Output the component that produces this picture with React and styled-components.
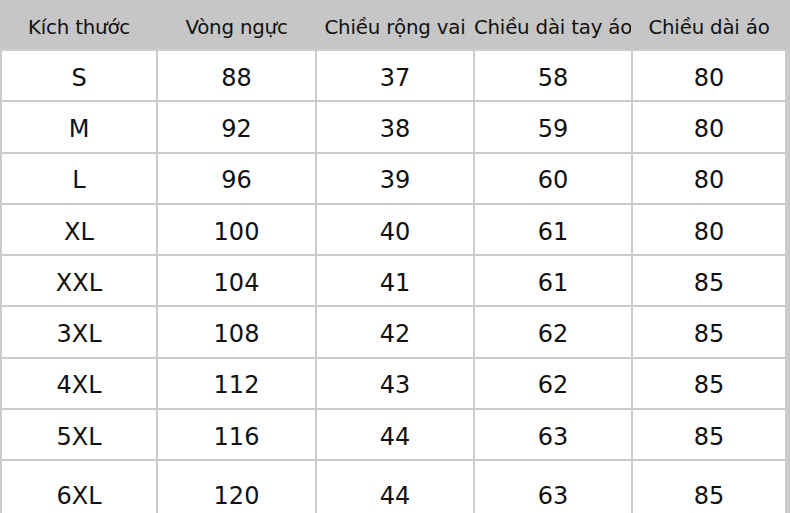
import React from "react";
import styled, { createGlobalStyle } from "styled-components";

const Global = createGlobalStyle`
  html, body { margin: 0; padding: 0; background: #ffffff; }
  body { width: 790px; height: 513px; overflow: hidden; }
`;

const Frame = styled.div`
  width: 790px;
  height: 513px;
  overflow: hidden;
`;

const Table = styled.div`
  display: grid;
  grid-template-columns: 154px 157px 156px 156px 152px;
  grid-template-rows: 49px repeat(8, 49.3px) 66px;
  column-gap: 2px;
  row-gap: 2px;
  width: 790px;
  box-sizing: border-box;
  padding-left: 2px;
  padding-right: 5px;
  background: #cbcbcb;
  font-family: "DejaVu Sans", Verdana, sans-serif;
  color: #111111;
`;

const HeaderCell = styled.div`
  display: flex;
  align-items: center;
  justify-content: center;
  background: #c6c6c6;
  font-size: 19.8px;
  padding-top: 6px;
  white-space: nowrap;
  letter-spacing: -0.2px;
  margin-left: ${(p) => (p.$first ? "-2px" : "0")};
  margin-right: ${(p) => (p.$last ? "-5px" : "0")};
  padding-right: ${(p) => (p.$last ? "5px" : "0")};
  padding-left: ${(p) => (p.$first ? "2px" : "0")};
  position: relative;
  &::after {
    content: "";
    position: absolute;
    right: -2px;
    top: 0;
    bottom: 0;
    width: 2px;
    background: #c6c6c6;
    display: ${(p) => (p.$last ? "none" : "block")};
  }
`;

const Cell = styled.div`
  display: flex;
  align-items: center;
  justify-content: center;
  background: #ffffff;
  font-size: 24px;
  padding-top: 4px;
  box-sizing: border-box;
`;

const headers = [
  "Kích thước",
  "Vòng ngực",
  "Chiều rộng vai",
  "Chiều dài tay áo",
  "Chiều dài áo",
];

const rows = [
  ["S", "88", "37", "58", "80"],
  ["M", "92", "38", "59", "80"],
  ["L", "96", "39", "60", "80"],
  ["XL", "100", "40", "61", "80"],
  ["XXL", "104", "41", "61", "85"],
  ["3XL", "108", "42", "62", "85"],
  ["4XL", "112", "43", "62", "85"],
  ["5XL", "116", "44", "63", "85"],
  ["6XL", "120", "44", "63", "85"],
];

export default function App() {
  return (
    <>
      <Global />
      <Frame>
        <Table>
          {headers.map((h, i) => (
            <HeaderCell key={h} $first={i === 0} $last={i === headers.length - 1}>
              {h}
            </HeaderCell>
          ))}
          {rows.map((r) =>
            r.map((v, j) => <Cell key={r[0] + j}>{v}</Cell>)
          )}
        </Table>
      </Frame>
    </>
  );
}
